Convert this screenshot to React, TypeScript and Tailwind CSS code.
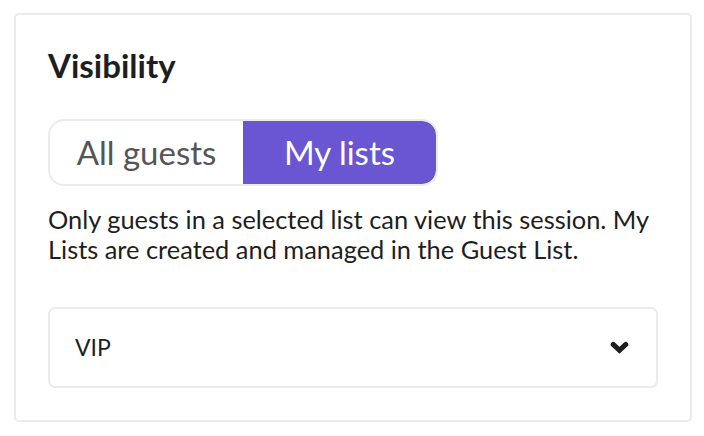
import React, { useState } from 'react';

const ChevronDown = () => (
  <svg width="19" height="13" viewBox="0 0 19 13" className="text-[#1e1e1e]">
    <path
      d="M3.2 3.4 L9.5 9.4 L15.8 3.4"
      fill="none"
      stroke="currentColor"
      strokeWidth="5"
      strokeLinecap="round"
      strokeLinejoin="miter"
    />
  </svg>
);

const App: React.FC = () => {
  const [mode, setMode] = useState<'all' | 'lists'>('lists');

  return (
    <div className="min-h-screen w-full bg-white pt-[13px] pl-[14px] font-['Lato',sans-serif]">
      <div className="w-[678px] h-[409px] rounded-[5px] border-2 border-[#ebebeb] px-[32px] pt-[31px]">
        <h2 className="text-[33px] leading-[39px] font-bold text-[#1e1e1e]">Visibility</h2>

        {/* Segmented toggle */}
        <div className="mt-[34px] flex w-[390px] h-[67px] rounded-[16px] border-2 border-[#ebebeb] overflow-hidden">
          <button
            onClick={() => setMode('all')}
            className={`flex-1 text-[33px] leading-none ${mode === 'all' ? 'bg-[#6a55d2] text-white rounded-[14px]' : 'text-[#555555]'}`}
          >
            All guests
          </button>
          <button
            onClick={() => setMode('lists')}
            className={`flex-1 text-[33px] leading-none ${mode === 'lists' ? 'bg-[#6a55d2] text-white rounded-r-[14px]' : 'text-[#555555]'}`}
          >
            My lists
          </button>
        </div>

        <p className="mt-[18px] w-[610px] text-[25.4px] leading-[30px] text-[#1e1e1e]">
          Only guests in a selected list can view this session. My Lists are created and managed in the Guest List.
        </p>

        {/* List select */}
        <div className="mt-[43px] flex h-[81px] w-[610px] items-center justify-between rounded-[7px] border-2 border-[#ebebeb] pl-[25px] pr-[27px]">
          <span className="text-[23px] text-[#1e1e1e]">VIP</span>
          <ChevronDown />
        </div>
      </div>
    </div>
  );
};

export default App;
